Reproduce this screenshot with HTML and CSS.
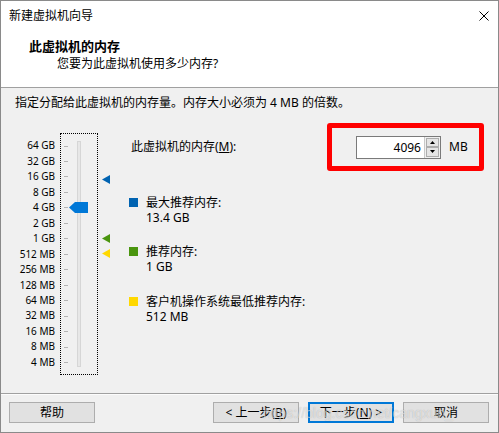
FILE: index.html
```html
<!DOCTYPE html>
<html lang="zh-CN">
<head>
<meta charset="utf-8">
<title>新建虚拟机向导</title>
<link rel="stylesheet" href="styles.css">
</head>
<body>
<div class="window">
  <div class="titlebar">
    <span class="title">新建虚拟机向导</span>
    <svg class="close" width="10" height="10" viewBox="0 0 10 10"><path d="M0.5 0.5L9.5 9.5M9.5 0.5L0.5 9.5" stroke="#000" stroke-width="1" fill="none"/></svg>
  </div>
  <div class="header">
    <div class="h-title">此虚拟机的内存</div>
    <div class="h-sub">您要为此虚拟机使用多少内存?</div>
  </div>
  <div class="body">
    <div class="intro">指定分配给此虚拟机的内存量。内存大小必须为 4 MB 的倍数。</div>
    <div class="main">
      <div class="slider">
        <div class="labels">
          <span>64 GB</span><span>32 GB</span><span>16 GB</span><span>8 GB</span><span>4 GB</span><span>2 GB</span><span>1 GB</span><span>512 MB</span><span>256 MB</span><span>128 MB</span><span>64 MB</span><span>32 MB</span><span>16 MB</span><span>8 MB</span><span>4 MB</span>
        </div>
        <div class="box">
          <div class="ticks">
            <span><i></i></span><span><i></i></span><span><i></i></span><span><i></i></span><span><i></i></span><span><i></i></span><span><i></i></span><span><i></i></span><span><i></i></span><span><i></i></span><span><i></i></span><span><i></i></span><span><i></i></span><span><i></i></span><span><i></i></span>
          </div>
          <div class="track"></div>
          <svg class="thumb" width="19" height="11" viewBox="0 0 19 11"><polygon points="0,5.5 6,0 19,0 19,11 6,11" fill="#0078d7"/></svg>
        </div>
        <svg class="marker m-max" width="8" height="9" viewBox="0 0 8 9"><polygon points="0,4.5 8,0 8,9" fill="#0063b1"/></svg>
        <svg class="marker m-rec" width="8" height="9" viewBox="0 0 8 9"><polygon points="0,4.5 8,0 8,9" fill="#4a950e"/></svg>
        <svg class="marker m-min" width="8" height="9" viewBox="0 0 8 9"><polygon points="0,4.5 8,0 8,9" fill="#ffd800"/></svg>
      </div>
      <div class="panel">
        <div class="mem-row">
          <span class="mem-label">此虚拟机的内存(<u>M</u>):</span>
          <div class="highlight">
            <div class="spin">
              <div class="field">4096</div>
              <div class="spinner">
                <span class="sbtn"><svg width="5" height="3" viewBox="0 0 5 3"><polygon points="2.5,0 5,3 0,3" fill="#000"/></svg></span>
                <span class="sbtn"><svg width="5" height="3" viewBox="0 0 5 3"><polygon points="0,0 5,0 2.5,3" fill="#000"/></svg></span>
              </div>
            </div>
            <span class="unit">MB</span>
          </div>
        </div>
        <div class="legend">
          <div class="item"><span class="sq sq-blue"></span><div><div>最大推荐内存:</div><div>13.4 GB</div></div></div>
          <div class="item"><span class="sq sq-green"></span><div><div>推荐内存:</div><div>1 GB</div></div></div>
          <div class="item"><span class="sq sq-yellow"></span><div><div>客户机操作系统最低推荐内存:</div><div>512 MB</div></div></div>
        </div>
      </div>
    </div>
  </div>
  <div class="footer">
    <button class="btn">帮助</button>
    <div class="spacer"></div>
    <button class="btn">&lt; 上一步(<u>B</u>)</button>
    <button class="btn btn-default">下一步(<u>N</u>) &gt;</button>
    <button class="btn">取消</button>
  </div>
  <div class="watermark">https://blog.csdn.net/cangxun_</div>
</div>
</body>
</html>
```
FILE: styles.css
```css
html, body {
  margin: 0;
  padding: 0;
  background: #fff;
}

.window {
  position: relative;
  width: 499px;
  height: 433px;
  box-sizing: border-box;
  border: 1px solid #8a8a8a;
  background: #f0f0f0;
  display: flex;
  flex-direction: column;
  font-family: "Noto Sans", "Noto Sans CJK SC", sans-serif;
  font-size: 12px;
  color: #000;
  overflow: hidden;
}

.titlebar {
  height: 29px;
  background: #fff;
  display: flex;
  align-items: center;
  justify-content: space-between;
  padding: 0 9px 0 8px;
}

.title {
  line-height: 16px;
}

.close {
  display: block;
}

.header {
  background: #fff;
  border-bottom: 1px solid #a0a0a0;
  padding: 7px 0 0 28px;
  box-sizing: content-box;
  height: 50px;
}

.h-title {
  font-weight: bold;
  font-size: 13px;
  line-height: 18px;
}

.h-sub {
  line-height: 18px;
  padding-left: 28px;
}

.body {
  flex: 1;
  padding: 7px 14px 0 14px;
}

.intro {
  line-height: 16px;
}

.main {
  display: flex;
  align-items: flex-start;
  margin-top: 12px;
}

.slider {
  position: relative;
  display: flex;
  gap: 5px;
  margin-top: 10px;
}

.labels {
  width: 40px;
  padding-top: 5.3px;
  display: flex;
  flex-direction: column;
}

.labels span {
  display: block;
  height: 15.48px;
  line-height: 15.48px;
  font-size: 10px;
  text-align: right;
  white-space: nowrap;
}

.box {
  position: relative;
  width: 38px;
  height: 242px;
  box-sizing: border-box;
  border: 1px dotted #000;
}

.ticks {
  padding-top: 4.3px;
  display: flex;
  flex-direction: column;
}

.ticks span {
  height: 15.48px;
  display: flex;
  align-items: center;
}

.ticks i {
  display: block;
  width: 4px;
  height: 1px;
  margin-left: 3px;
  background: #b4b4b4;
}

.track {
  position: absolute;
  left: 16px;
  top: 7px;
  width: 4px;
  height: 226px;
  box-sizing: border-box;
  border: 1px solid #d6d6d6;
  background: #e7e7e7;
}

.thumb {
  position: absolute;
  left: 8px;
  top: 68px;
  display: block;
}

.marker {
  position: absolute;
  left: 87px;
  display: block;
}

.m-max { top: 42px; }
.m-rec { top: 101px; }
.m-min { top: 116px; }

.panel {
  flex: 1;
  margin-left: 31px;
}

.mem-row {
  display: flex;
  align-items: center;
  justify-content: space-between;
}

.mem-label {
  padding-left: 2px;
  line-height: 16px;
}

.highlight {
  width: 157px;
  height: 48px;
  box-sizing: border-box;
  border: 5px solid #ff0000;
  border-radius: 3px;
  display: flex;
  align-items: center;
  padding-left: 24px;
}

.spin {
  display: flex;
  width: 85px;
  height: 23px;
  box-sizing: border-box;
  border: 1px solid #7a7a7a;
  background: #fff;
}

.field {
  flex: 1;
  text-align: right;
  padding-right: 3px;
  line-height: 21px;
}

.spinner {
  width: 16px;
  box-sizing: border-box;
  padding: 1px;
  display: flex;
  flex-direction: column;
  background: #f0f0f0;
  border-left: 1px solid #c8c8c8;
}

.sbtn {
  flex: 1;
  box-sizing: border-box;
  border: 1px solid #adadad;
  background: #e5e5e5;
  display: flex;
  align-items: center;
  justify-content: center;
}

.sbtn svg {
  display: block;
}

.unit {
  margin-left: 8px;
  line-height: 16px;
}

.legend {
  margin-top: 23.5px;
  display: flex;
  flex-direction: column;
  gap: 19.5px;
}

.item {
  display: flex;
  align-items: flex-start;
  gap: 8px;
  line-height: 15px;
}

.sq {
  display: block;
  width: 9px;
  height: 9px;
  margin-top: 3px;
  flex: none;
}

.sq-blue { background: #0063b1; }
.sq-green { background: #4a950e; }
.sq-yellow { background: #ffd800; }

.footer {
  display: flex;
  align-items: center;
  border-top: 1px solid #a0a0a0;
  box-shadow: inset 0 1px 0 #fcfcfc;
  padding: 8px 9px 9px 8px;
}

.spacer {
  flex: 1;
}

.btn {
  width: 86px;
  height: 21px;
  box-sizing: border-box;
  border: 1px solid #adadad;
  background: #e1e1e1;
  font-family: "Noto Sans", "Noto Sans CJK SC", sans-serif;
  font-size: 12px;
  color: #000;
  padding: 0;
  margin: 0;
  line-height: 17px;
}

.btn + .btn {
  margin-left: 9px;
}

.btn-default {
  border: 2px solid #0078d7;
}

.watermark {
  position: absolute;
  left: 262px;
  top: 403px;
  font-family: "Liberation Sans", sans-serif;
  font-size: 14px;
  line-height: 18px;
  color: rgba(255, 255, 255, 0.55);
  text-shadow: 0 0 1px rgba(0, 0, 0, 0.25);
  pointer-events: none;
  white-space: nowrap;
}
```
